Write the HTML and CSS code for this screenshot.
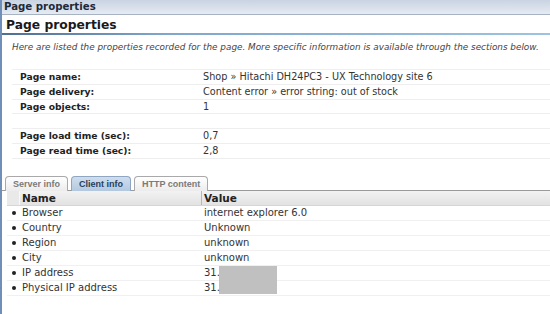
FILE: index.html
```html
<!DOCTYPE html>
<html>
<head>
<meta charset="utf-8">
<link rel="stylesheet" href="styles.css">
</head>
<body>
<div class="frame">
  <div class="titlebar">Page properties</div>
  <div class="content">
    <h1 class="section-title">Page properties</h1>
    <p class="desc">Here are listed the properties recorded for the page. More specific information is available through the sections below.</p>
    <div class="props">
      <div class="prow"><span class="plabel">Page name:</span><span class="pval">Shop » Hitachi DH24PC3 - UX Technology site 6</span></div>
      <div class="prow"><span class="plabel">Page delivery:</span><span class="pval">Content error » error string: out of stock</span></div>
      <div class="prow"><span class="plabel">Page objects:</span><span class="pval">1</span></div>
      <div class="prow"><span class="plabel"></span><span class="pval"></span></div>
      <div class="prow"><span class="plabel">Page load time (sec):</span><span class="pval">0,7</span></div>
      <div class="prow"><span class="plabel">Page read time (sec):</span><span class="pval">2,8</span></div>
    </div>
    <div class="tabs">
      <div class="tab">Server info</div>
      <div class="tab active">Client info</div>
      <div class="tab">HTTP content</div>
    </div>
    <div class="grid">
      <div class="ghead"><span class="gb"></span><span class="gname">Name</span><span class="gval">Value</span></div>
      <div class="grow"><span class="gb"><i class="dot"></i></span><span class="gname">Browser</span><span class="gval">internet explorer 6.0</span></div>
      <div class="grow"><span class="gb"><i class="dot"></i></span><span class="gname">Country</span><span class="gval">Unknown</span></div>
      <div class="grow"><span class="gb"><i class="dot"></i></span><span class="gname">Region</span><span class="gval">unknown</span></div>
      <div class="grow"><span class="gb"><i class="dot"></i></span><span class="gname">City</span><span class="gval">unknown</span></div>
      <div class="grow"><span class="gb"><i class="dot"></i></span><span class="gname">IP address</span><span class="gval">31.<span class="mask"></span></span></div>
      <div class="grow"><span class="gb"><i class="dot"></i></span><span class="gname">Physical IP address</span><span class="gval">31.</span></div>
    </div>
  </div>
</div>
</body>
</html>
```
FILE: styles.css
```css
* { box-sizing: border-box; }
html, body { margin: 0; padding: 0; background: #fff; }
body {
  font-family: "DejaVu Sans", Verdana, sans-serif;
  color: #333;
  width: 550px;
  height: 314px;
  overflow: hidden;
}
.frame {
  height: 314px;
  border-left: 2px solid #6f8fb8;
}
.titlebar {
  height: 15px;
  line-height: 14px;
  padding-left: 2px;
  font-size: 10.2px;
  font-weight: bold;
  color: #1e2a3a;
  background: linear-gradient(#c9d3e2, #e6ebf2);
  border-bottom: 1px solid #a7b2c2;
}
.section-title {
  margin: 0;
  height: 20px;
  padding: 2px 0 0 4px;
  font-size: 12.3px;
  line-height: 16px;
  font-weight: bold;
  color: #1a1a1a;
  border-bottom: 2px solid transparent;
  border-image: linear-gradient(to right, #4e6d92, #7fa7cc 30%, #9cc3e0) 1;
}
.desc {
  margin: 6px 0 0 10px;
  font-size: 8.85px;
  line-height: 12px;
  font-style: italic;
  color: #444;
  white-space: nowrap;
}
.props {
  margin: 16px 0 0 10px;
  border-top: 1px solid #f0f0f0;
}
.prow {
  display: flex;
  height: 14.8px;
  line-height: 14px;
  border-bottom: 1px solid #eeeeee;
  font-size: 9.7px;
}
.plabel {
  width: 191px;
  padding-left: 8px;
  font-weight: bold;
  font-size: 9.2px;
  color: #222;
}
.pval { color: #333; }
.tabs {
  display: flex;
  margin-top: 16px;
  padding-left: 3px;
  gap: 3px;
  height: 16px;
  border-bottom: 1px solid #9a9a9a;
  align-items: flex-end;
}
.tab {
  height: 15px;
  line-height: 14px;
  padding: 0 7px;
  font-family: "Liberation Sans", Arial, sans-serif;
  font-size: 9px;
  font-weight: bold;
  color: #7a7a7a;
  background: linear-gradient(#ffffff, #ececec);
  border: 1px solid #a9a9a9;
  border-bottom: none;
  border-radius: 4px 4px 0 0;
  margin-bottom: -1px;
}
.tab.active {
  color: #24405e;
  background: linear-gradient(#cfdeee, #b3c9e0);
  border-color: #8ea6c1;
}
.grid { margin-left: 5px; }
.ghead, .grow {
  display: flex;
  height: 15px;
  line-height: 14px;
  font-size: 10px;
}
.ghead {
  font-weight: bold;
  color: #222;
  background: linear-gradient(#f2f2f2, #e2e2e2);
  border-bottom: 1px solid #d6d6d6;
  font-size: 10.5px;
}
.grow { border-bottom: 1px solid #f0f0f0; }
.gb {
  width: 13px;
  display: flex;
  align-items: center;
  justify-content: center;
}
.ghead .gb { background: #e9e9e9; border-right: 1px solid #f8f8f8; }
.gname { width: 182px; padding-left: 2px; }
.ghead .gname { border-right: 1px solid #b8b8b8; }
.gval { padding-left: 2px; position: relative; flex: 1; }
.dot {
  display: block;
  width: 4px;
  height: 4px;
  border-radius: 50%;
  background: #222;
}
.mask {
  position: absolute;
  left: 17px;
  top: 0;
  width: 58px;
  height: 28px;
  background: #c0c0c0;
}
```
